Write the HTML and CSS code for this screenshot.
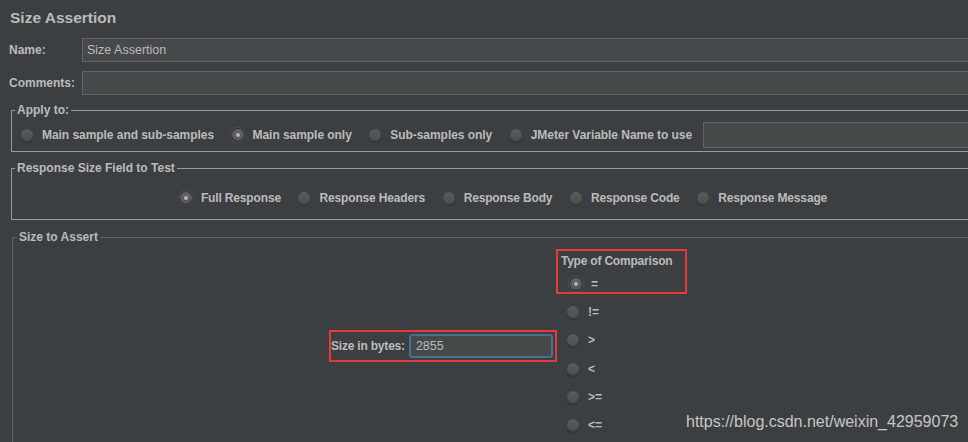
FILE: index.html
```html
<!DOCTYPE html>
<html>
<head>
<meta charset="utf-8">
<link rel="stylesheet" href="styles.css">
</head>
<body>
<div class="title">Size Assertion</div>
<div class="row">
  <span class="lbl">Name:</span>
  <div class="input">Size Assertion</div>
</div>
<div class="row comments">
  <span class="lbl">Comments:</span>
  <div class="input"></div>
</div>

<fieldset class="group apply">
  <legend>Apply to:</legend>
  <div class="radios">
    <span class="opt"><span class="radio"></span>Main sample and sub-samples</span>
    <span class="opt"><span class="radio on"></span>Main sample only</span>
    <span class="opt"><span class="radio"></span>Sub-samples only</span>
    <span class="opt"><span class="radio"></span>JMeter Variable Name to use</span>
    <div class="input var"></div>
  </div>
</fieldset>

<fieldset class="group resp">
  <legend>Response Size Field to Test</legend>
  <div class="radios center">
    <span class="opt"><span class="radio on"></span>Full Response</span>
    <span class="opt"><span class="radio"></span>Response Headers</span>
    <span class="opt"><span class="radio"></span>Response Body</span>
    <span class="opt"><span class="radio"></span>Response Code</span>
    <span class="opt"><span class="radio"></span>Response Message</span>
  </div>
</fieldset>

<fieldset class="group size">
  <legend>Size to Assert</legend>
  <div class="assert-body">
    <div class="size-box mark">
      <span class="size-lbl">Size in bytes:</span>
      <div class="input focus">2855</div>
    </div>
    <div class="compare">
      <div class="compare-head mark">
        <div class="compare-title">Type of Comparison</div>
        <div class="crow"><span class="radio on"></span>=</div>
      </div>
      <div class="crow out first"><span class="radio"></span>!=</div>
      <div class="crow out"><span class="radio"></span>&gt;</div>
      <div class="crow out"><span class="radio"></span>&lt;</div>
      <div class="crow out"><span class="radio"></span>&gt;=</div>
      <div class="crow out"><span class="radio"></span>&lt;=</div>
    </div>
  </div>
</fieldset>

<div class="watermark">https://blog.csdn.net/weixin_42959073</div>
</body>
</html>
```

FILE: styles.css
```css
html, body {
  margin: 0;
  padding: 0;
  height: 442px;
  overflow: hidden;
}
body {
  position: relative;
  background: #3c3f41;
  color: #bbbbbb;
  font-family: "Liberation Sans", Arial, sans-serif;
  font-size: 12px;
  font-weight: bold;
}
.title {
  height: 38px;
  box-sizing: border-box;
  padding: 9px 10px 0;
  line-height: 18px;
  font-size: 15.5px;
  font-weight: bold;
}
.row {
  display: flex;
  align-items: center;
  height: 24px;
  padding-left: 9px;
  margin-right: -30px;
}
.row.comments {
  margin-top: 9px;
}
.lbl {
  width: 73px;
  flex: none;
}
.input {
  flex: 1;
  height: 24px;
  box-sizing: border-box;
  background: #45494a;
  border: 1px solid #646464;
  padding: 0 4px;
  line-height: 22px;
  font-weight: normal;
  font-size: 12.5px;
  color: #bbbbbb;
}
.group {
  margin: 0 -27px 0 11px;
  padding: 0;
  border: 1px solid #9a9a9a;
  min-width: 0;
}
.group legend {
  margin-left: 3px;
  padding: 0 2px;
  line-height: 14px;
  font-size: 12px;
  font-weight: bold;
}
.apply {
  margin-top: 8px;
}
.resp {
  margin-top: 9px;
}
.radios {
  display: flex;
  align-items: center;
  gap: 16.5px;
  letter-spacing: -0.15px;
}
.apply .radios {
  height: 26px;
  padding: 5px 0 3px 8px;
  letter-spacing: -0.05px;
}
.resp .radios {
  height: 20px;
  padding: 13px 0 11px;
  justify-content: center;
}
.opt {
  display: flex;
  align-items: center;
  white-space: nowrap;
}
.radio {
  position: relative;
  flex: none;
  width: 14px;
  height: 14px;
  border-radius: 50%;
  box-sizing: border-box;
  background: linear-gradient(#5b5e60, #4a4d4f);
  box-shadow: inset 0 0 0 1px #36393b, 0 1px 1px rgba(0,0,0,0.2);
  margin-right: 8px;
}
.radio.on {
  background: linear-gradient(#65686a, #505355);
  box-shadow: inset 0 0 0 1px #2e3032, 0 0 0 1px rgba(110,110,110,0.3);
}
.radio.on::after {
  content: "";
  position: absolute;
  left: 5px;
  top: 5px;
  width: 4px;
  height: 4px;
  border-radius: 50%;
  background: #b4b6b8;
}
.input.var {
  margin-left: -6px;
  height: 26px;
}
.size {
  margin-top: 10px;
  margin-left: 12px;
  border-color: #5f6263;
}
.size legend {
  margin-left: 4px;
}
.assert-body {
  display: flex;
  align-items: flex-start;
  padding: 0 0 40px 316px;
}
.mark {
  border: 2px solid #e8393a;
  box-sizing: border-box;
}
.size-box {
  display: flex;
  align-items: center;
  margin-top: 86px;
  padding: 2px 2px 2px 0;
}
.size-lbl {
  margin-right: 4px;
  white-space: nowrap;
  letter-spacing: -0.2px;
}
.input.focus {
  flex: none;
  width: 144px;
  height: 24px;
  border: 2px solid #4a6f93;
  border-radius: 3px;
  padding: 0 5px;
  line-height: 20px;
  font-size: 12.5px;
}
.compare {
  margin-top: 5px;
  margin-left: -1px;
  display: flex;
  flex-direction: column;
}
.compare-head {
  width: 131px;
  padding: 3px 0 0 3px;
}
.compare-title {
  line-height: 14px;
  white-space: nowrap;
  letter-spacing: -0.2px;
}
.crow {
  display: flex;
  align-items: center;
  height: 16px;
  margin-top: 8px;
  padding-left: 8px;
}
.crow.out {
  padding-left: 10px;
  margin-top: 12.25px;
}
.crow.out.first {
  margin-top: 10px;
}
.watermark {
  position: absolute;
  left: 686px;
  top: 413px;
  font-size: 16px;
  font-weight: normal;
  color: #c6c6c6;
  white-space: nowrap;
}
```
